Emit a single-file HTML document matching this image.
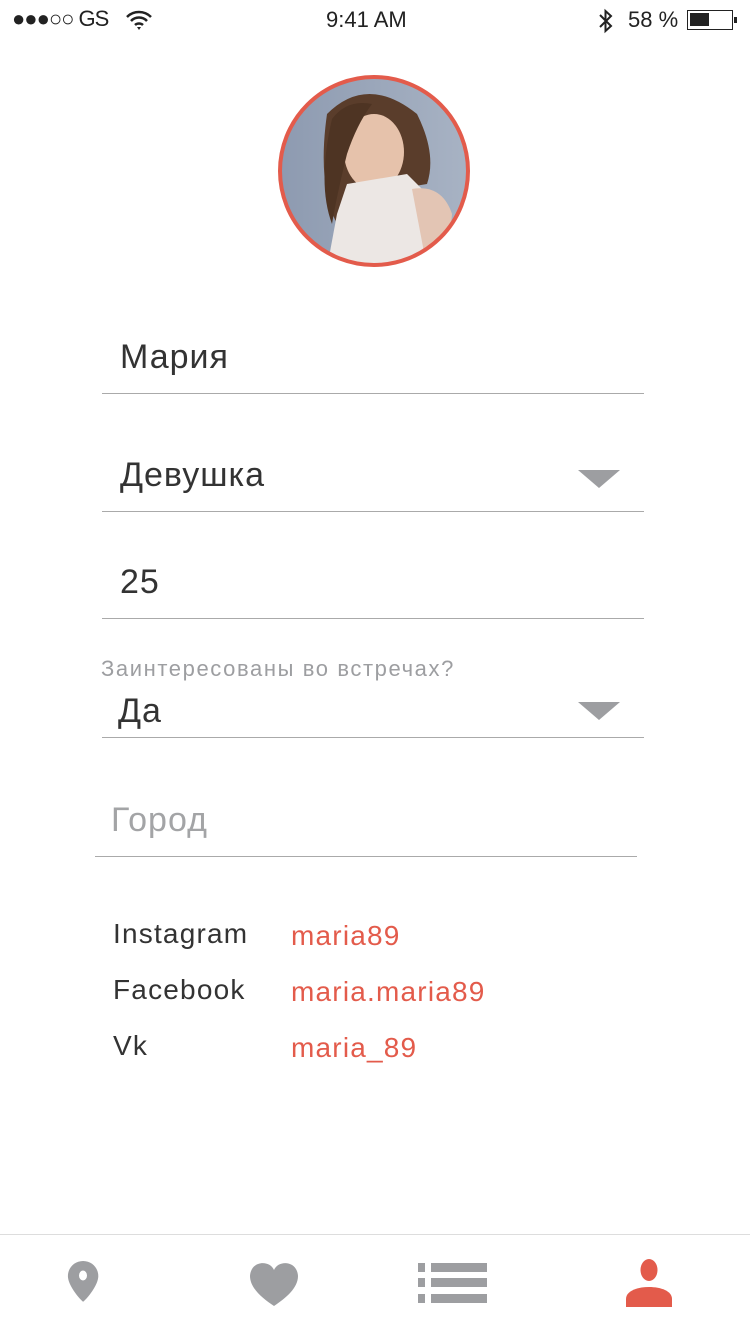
<!DOCTYPE html>
<html><head><meta charset="utf-8"><style>
*{margin:0;padding:0;box-sizing:border-box}
body{width:750px;height:1335px;background:#fff;position:relative;overflow:hidden;font-family:"Liberation Sans",Arial,sans-serif;color:#333}
.a{position:absolute;white-space:nowrap}
.line{position:absolute;height:1px;background:#aaa}
.tri{position:absolute;width:0;height:0;border-left:21px solid transparent;border-right:21px solid transparent;border-top:18px solid #9d9ea1}
.s{font-size:28px;color:#333;letter-spacing:1.2px}
.v{font-size:28px;color:#e35b4b;letter-spacing:1.2px}
.b{font-size:34px;letter-spacing:1px}
</style></head><body>
<div class="a" style="left:12px;top:6px;font-size:22px;color:#222;letter-spacing:-1px">●●●○○ GS</div>
<svg class="a" style="left:126px;top:10px" width="26" height="20" viewBox="0 0 26 20"><path d="M1 7 A17 17 0 0 1 25 7" stroke="#222" stroke-width="2.5" fill="none"/><path d="M5 11 A11 11 0 0 1 21 11" stroke="#222" stroke-width="2.5" fill="none"/><path d="M9 15 A6 6 0 0 1 17 15" stroke="#222" stroke-width="2.5" fill="none"/><path d="M11 17 L13 20 L15 17Z" fill="#222"/></svg>
<div class="a" style="left:326px;top:7px;font-size:22px;color:#222">9:41 AM</div>
<svg class="a" style="left:597px;top:8px" width="18" height="26" viewBox="0 0 18 26"><path d="M3 7 L14 18 L8.5 23 L8.5 3 L14 8 L3 19" stroke="#222" stroke-width="2" fill="none"/></svg>
<div class="a" style="left:628px;top:7px;font-size:22px;color:#222">58 %</div>
<div class="a" style="left:687px;top:10px;width:46px;height:20px;border:1.5px solid #222"><div style="position:absolute;left:2px;top:2px;width:19px;height:13px;background:#222"></div></div>
<div class="a" style="left:734px;top:17px;width:3px;height:6px;background:#222"></div>

<svg class="a" style="left:277px;top:74px" width="194" height="194" viewBox="0 0 194 194">
<defs><clipPath id="c"><circle cx="97" cy="97" r="94"/></clipPath>
<linearGradient id="bg" x1="0" x2="1"><stop offset="0" stop-color="#8d9ab0"/><stop offset="1" stop-color="#a8b3c4"/></linearGradient></defs>
<g clip-path="url(#c)">
<rect width="194" height="194" fill="url(#bg)"/>
<path d="M50 40 Q90 0 140 40 Q160 80 150 110 L120 115 L60 150 Q40 110 50 40Z" fill="#5a3d2b"/>
<ellipse cx="97" cy="78" rx="30" ry="38" fill="#e6c2ab"/>
<path d="M70 110 L130 100 L160 130 L170 194 L50 194 L60 140Z" fill="#ece7e4"/>
<path d="M135 115 Q165 110 175 140 L170 194 L150 194Z" fill="#e3c5b4"/>
<path d="M55 45 Q70 25 95 30 Q80 50 70 80 Q60 120 55 150 Q40 110 55 45Z" fill="#4e3423"/>
</g>
<circle cx="97" cy="97" r="94" fill="none" stroke="#e35b4b" stroke-width="4"/>
</svg>

<div class="a b" style="left:120px;top:338px">Мария</div>
<div class="line" style="left:102px;top:393px;width:542px"></div>
<div class="a b" style="left:120px;top:456px">Девушка</div>
<div class="tri" style="left:578px;top:470px"></div>
<div class="line" style="left:102px;top:511px;width:542px"></div>
<div class="a b" style="left:120px;top:563px">25</div>
<div class="line" style="left:102px;top:618px;width:542px"></div>
<div class="a" style="left:101px;top:656px;font-size:22px;color:#9d9ea1;letter-spacing:1.6px">Заинтересованы во встречах?</div>
<div class="a b" style="left:118px;top:692px">Да</div>
<div class="tri" style="left:578px;top:702px"></div>
<div class="line" style="left:102px;top:737px;width:542px"></div>
<div class="a b" style="left:111px;top:801px;color:#a3a4a6">Город</div>
<div class="line" style="left:95px;top:856px;width:542px"></div>

<div class="a s" style="left:113px;top:918px">Instagram</div><div class="a v" style="left:291px;top:920px">maria89</div>
<div class="a s" style="left:113px;top:974px">Facebook</div><div class="a v" style="left:291px;top:976px">maria.maria89</div>
<div class="a s" style="left:113px;top:1030px">Vk</div><div class="a v" style="left:291px;top:1032px">maria_89</div>

<div class="line" style="left:0;top:1234px;width:750px;background:#ddd"></div>
<svg class="a" style="left:66px;top:1260px" width="34" height="46" viewBox="0 0 34 46"><path d="M17 1 C8 1 1 8 1 17 C1 26 12 40 17 44 C22 40 33 26 33 17 C33 8 26 1 17 1Z" fill="#9d9ea1" transform="scale(0.95) translate(1 0)"/><ellipse cx="17" cy="15.5" rx="4" ry="5" fill="#fff"/></svg>
<svg class="a" style="left:248px;top:1260px" width="52" height="46" viewBox="0 0 52 46"><path d="M26 10 C22 0 3 0 2 16 C2 28 14 38 26 46 C38 38 50 28 50 16 C49 0 30 0 26 10Z" fill="#9d9ea1"/></svg>
<div class="a" style="left:418px;top:1263px;width:7px;height:9px;background:#9d9ea1"></div>
<div class="a" style="left:431px;top:1263px;width:56px;height:9px;background:#9d9ea1"></div>
<div class="a" style="left:418px;top:1278px;width:7px;height:9px;background:#9d9ea1"></div>
<div class="a" style="left:431px;top:1278px;width:56px;height:9px;background:#9d9ea1"></div>
<div class="a" style="left:418px;top:1294px;width:7px;height:9px;background:#9d9ea1"></div>
<div class="a" style="left:431px;top:1294px;width:56px;height:9px;background:#9d9ea1"></div>
<svg class="a" style="left:625px;top:1259px" width="48" height="48" viewBox="0 0 48 48"><ellipse cx="24" cy="11" rx="8.5" ry="11" fill="#e35b4b"/><path d="M1 48 L1 40 C1 32 12 28 24 28 C36 28 47 32 47 40 L47 48Z" fill="#e35b4b"/></svg>
</body></html>
